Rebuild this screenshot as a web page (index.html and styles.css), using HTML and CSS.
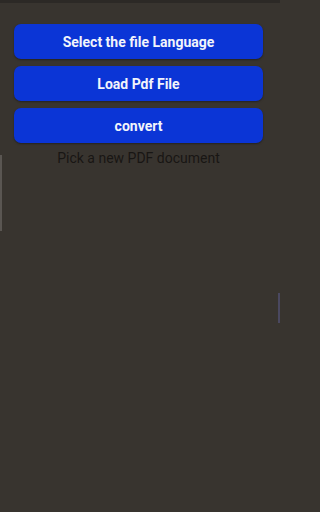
FILE: index.html
```html
<!DOCTYPE html>
<html>
<head>
<meta charset="utf-8">
<link rel="stylesheet" href="styles.css">
</head>
<body>
<div class="statusbar"></div>
<main class="screen">
  <div class="actions">
    <button class="btn">Select the file Language</button>
    <button class="btn">Load Pdf File</button>
    <button class="btn">convert</button>
  </div>
  <p class="hint">Pick a new PDF document</p>
  <div class="edge-left"></div>
  <div class="edge-right"></div>
</main>
</body>
</html>
```
FILE: styles.css
```css
html, body {
  margin: 0;
  padding: 0;
  height: 100%;
  background: #38342f;
}
body {
  font-family: Roboto, "Liberation Sans", sans-serif;
  display: flex;
  flex-direction: column;
  width: 280px;
}
.statusbar {
  height: 3px;
  background: #2c2926;
  flex: none;
}
.screen {
  position: relative;
  flex: 1;
  box-sizing: border-box;
  width: 280px;
  padding: 21px 17px 0 14px;
}
.actions {
  display: flex;
  flex-direction: column;
  gap: 7px;
}
.btn {
  height: 35px;
  border: none;
  border-radius: 7px;
  background: #0b35d6;
  color: #f2f4fb;
  font-family: Roboto, "Liberation Sans", sans-serif;
  font-weight: bold;
  font-size: 14px;
  box-shadow: 0 1px 2px rgba(0,0,0,0.35);
  padding: 0;
}
.hint {
  margin: 7px 0 0 0;
  text-align: center;
  font-size: 14px;
  color: #181614;
}
.edge-left {
  position: absolute;
  left: 0;
  top: 152px;
  width: 2px;
  height: 76px;
  background: #5a5652;
}
.edge-right {
  position: absolute;
  right: 0;
  top: 290px;
  width: 2px;
  height: 30px;
  background: #4a4860;
}
```
